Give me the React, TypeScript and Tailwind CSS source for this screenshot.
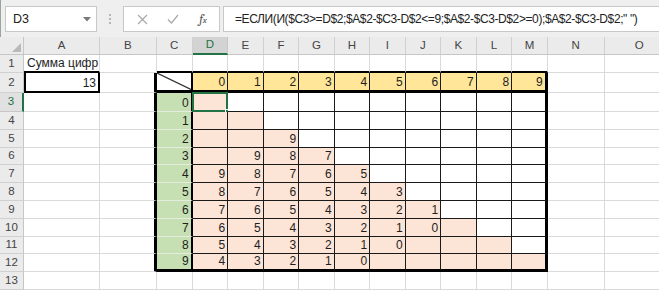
import React from 'react';

const FONT = { fontFamily: '"Liberation Sans", Arial, sans-serif' };
const UI_FONT = { fontFamily: '"Liberation Sans", Arial, sans-serif' };

const LETTERS = ['A', 'B', 'C', 'D', 'E', 'F', 'G', 'H', 'I', 'J', 'K', 'L', 'M', 'N', 'O'];
const COL_W = [
  'w-[76px]', 'w-[56.7px]', 'w-[36px]',
  'w-[35.5px]', 'w-[35.5px]', 'w-[35.5px]', 'w-[35.5px]', 'w-[35.5px]',
  'w-[35.5px]', 'w-[35.5px]', 'w-[35.5px]', 'w-[35.5px]', 'w-[35.5px]',
  'w-[57px]', 'w-[70px]',
];
const ROW_H = [
  'h-[18px]', 'h-[19.5px]', 'h-[19.5px]', 'h-[17.8px]', 'h-[17.8px]', 'h-[17.8px]', 'h-[17.8px]',
  'h-[17.8px]', 'h-[17.8px]', 'h-[17.8px]', 'h-[17.8px]', 'h-[17.8px]', 'h-[17.8px]',
];

const SUM = 13;

const value = (i: number, j: number) => {
  const v = SUM - i - j;
  return i >= j && v <= 9 && v >= 0 ? String(v) : '';
};

const cellInfo = (r: number, c: number) => {
  const inTable = r >= 2 && r <= 12 && c >= 2 && c <= 12;
  let right = 'border-r border-r-[#dadada]';
  let bottom = 'border-b border-b-[#dadada]';
  let left = '';
  let bg = 'bg-white';
  let text = '';
  let align = 'justify-end pr-[2px]';

  // right edges
  if (c === 1 && r >= 2 && r <= 12) right = 'border-r-[3px] border-r-black';
  if (inTable) {
    if (c === 2) right = 'border-r-2 border-r-black';
    else if (c === 12) right = 'border-r-[3px] border-r-black';
    else right = 'border-r border-r-[#1a1a1a]';
  }
  if (r === 2 && c === 0) {
    right = 'border-r-2 border-r-black';
    left = 'border-l-2 border-l-black';
  }

  // bottom edges
  if (r === 1 && c >= 2 && c <= 12) bottom = 'border-b-2 border-b-black';
  if (r === 1 && c === 0) bottom = 'border-b-2 border-b-black';
  if (r === 2 && c === 0) bottom = 'border-b-2 border-b-black';
  if (inTable) {
    if (r === 2) bottom = 'border-b-[3px] border-b-black';
    else if (r === 12) bottom = 'border-b-[3px] border-b-black';
    else if (c === 2) bottom = 'border-b border-b-[#e4ecdd]';
    else bottom = 'border-b border-b-[#1a1a1a]';
  }

  if (r === 1 && c === 0) {
    text = 'Сумма цифр';
    align = 'justify-start pl-[3px]';
  }
  if (r === 2 && c === 0) text = String(SUM);

  if (inTable) {
    const i = r - 3;
    const j = c - 3;
    if (r === 2 && c >= 3) {
      bg = 'bg-[#ffe699]';
      text = String(j);
    } else if (c === 2 && r >= 3) {
      bg = 'bg-[#c6e0b4]';
      text = String(i);
    } else if (r >= 3 && c >= 3) {
      bg = i >= j ? 'bg-[#fce4d6]' : 'bg-white';
      text = value(i, j);
    }
  }

  return { cls: `${right} ${bottom} ${left} ${bg} ${align}`, text };
};

function XIcon() {
  return (
    <svg width="11" height="11" viewBox="0 0 11 11">
      <path d="M1 1 L10 10 M10 1 L1 10" stroke="#a8a8a8" strokeWidth="1.2" fill="none" />
    </svg>
  );
}

function CheckIcon() {
  return (
    <svg width="12" height="10" viewBox="0 0 12 10">
      <path d="M1 5.5 L4.5 9 L11 1" stroke="#a8a8a8" strokeWidth="1.2" fill="none" />
    </svg>
  );
}

function FormulaBar() {
  return (
    <div className="flex h-[37px] items-start bg-[#efefef] pt-[6px] border-l border-l-[#9aa59c]">
      <div className="ml-[4px] flex h-[26px] w-[92px] shrink-0 items-center justify-between border border-[#c8c8c8] bg-white pl-[7px] pr-[5px]">
        <span className="text-[12.5px] text-[#222]" style={UI_FONT}>D3</span>
        <svg width="8" height="5" viewBox="0 0 8 5">
          <path d="M0 0 L8 0 L4 4.5 Z" fill="#7a7a7a" />
        </svg>
      </div>
      <div className="flex h-[26px] w-[26px] shrink-0 flex-col items-center justify-center gap-[2px]">
        <span className="h-[2px] w-[2px] bg-[#b5b5b5]" />
        <span className="h-[2px] w-[2px] bg-[#b5b5b5]" />
        <span className="h-[2px] w-[2px] bg-[#b5b5b5]" />
      </div>
      <div className="flex h-[26px] w-[97px] shrink-0 items-center border border-[#c8c8c8] bg-white">
        <div className="flex w-[34px] justify-center pl-[2px]"><XIcon /></div>
        <div className="flex w-[30px] justify-center"><CheckIcon /></div>
        <div className="flex w-[30px] justify-center">
          <span className="font-serif text-[13px] italic text-[#555]">
            f<span className="text-[9px]">x</span>
          </span>
        </div>
      </div>
      <div className="ml-[3px] flex h-[26px] min-w-0 flex-1 items-center overflow-hidden border border-r-0 border-[#c8c8c8] bg-white pl-[11px]">
        <span className="whitespace-nowrap text-[12px] tracking-[-0.4px] text-[#222]" style={UI_FONT}>
          =ЕСЛИ(И($C3&gt;=D$2;$A$2-$C3-D$2&lt;=9;$A$2-$C3-D$2&gt;=0);$A$2-$C3-D$2;" ")
        </span>
      </div>
    </div>
  );
}

function ColumnHeaders() {
  return (
    <div className="flex h-[18px]">
      <div className="flex w-[24px] shrink-0 items-end justify-end border-r border-b border-[#c6c6c6] bg-[#ebebeb] p-[2px]">
        <svg width="9" height="9" viewBox="0 0 9 9">
          <path d="M9 0 L9 9 L0 9 Z" fill="#b9b9b9" />
        </svg>
      </div>
      {LETTERS.map((l, c) => (
        <div
          key={l}
          className={`${COL_W[c]} flex shrink-0 items-center justify-center text-[11.5px] ${
            c === 3
              ? 'border-b-2 border-b-[#217346] border-r border-r-[#c6c6c6] bg-[#d3d3d3] text-[#217346]'
              : 'border-b border-b-[#c6c6c6] border-r border-r-[#d0d0d0] bg-[#ebebeb] text-[#444]'
          }`}
          style={FONT}
        >
          {l}
        </div>
      ))}
    </div>
  );
}

function Row({ r }: { r: number }) {
  return (
    <div className={`flex ${ROW_H[r - 1]}`}>
      <div
        className={`flex w-[24px] shrink-0 items-center justify-center text-[11.5px] ${
          r === 3
            ? 'border-r-2 border-r-[#217346] border-b border-b-[#c6c6c6] bg-[#e1e1e1] text-[#217346]'
            : 'border-r border-r-[#c6c6c6] border-b border-b-[#d0d0d0] bg-[#ebebeb] text-[#444]'
        }`}
        style={FONT}
      >
        {r}
      </div>
      {LETTERS.map((l, c) => {
        const { cls, text } = cellInfo(r, c);
        const isCorner = r === 2 && c === 2;
        const isSel = r === 3 && c === 3;
        return (
          <div
            key={l}
            className={`${COL_W[c]} relative flex shrink-0 items-end pb-[2px] text-[12px] leading-none text-[#1e1e1e] ${cls}`}
            style={FONT}
          >
            {isCorner && (
              <svg className="absolute inset-0 h-full w-full" viewBox="0 0 100 100" preserveAspectRatio="none">
                <line x1="0" y1="0" x2="100" y2="100" stroke="#333" strokeWidth="1.2" vectorEffect="non-scaling-stroke" />
              </svg>
            )}
            {isSel && (
              <>
                <div className="absolute -left-[1px] -top-[1px] -right-[1px] -bottom-[1px] border-2 border-[#217346]" />
                <div className="absolute -bottom-[4px] -right-[4px] h-[6px] w-[6px] border border-white bg-[#217346]" />
              </>
            )}
            <span className="whitespace-nowrap">{text}</span>
          </div>
        );
      })}
    </div>
  );
}

export default function App() {
  const rows = Array.from({ length: 13 }, (_, k) => k + 1);
  return (
    <div className="h-[291px] w-[659px] overflow-hidden bg-white">
      <FormulaBar />
      <ColumnHeaders />
      {rows.map((r) => (
        <Row key={r} r={r} />
      ))}
    </div>
  );
}
